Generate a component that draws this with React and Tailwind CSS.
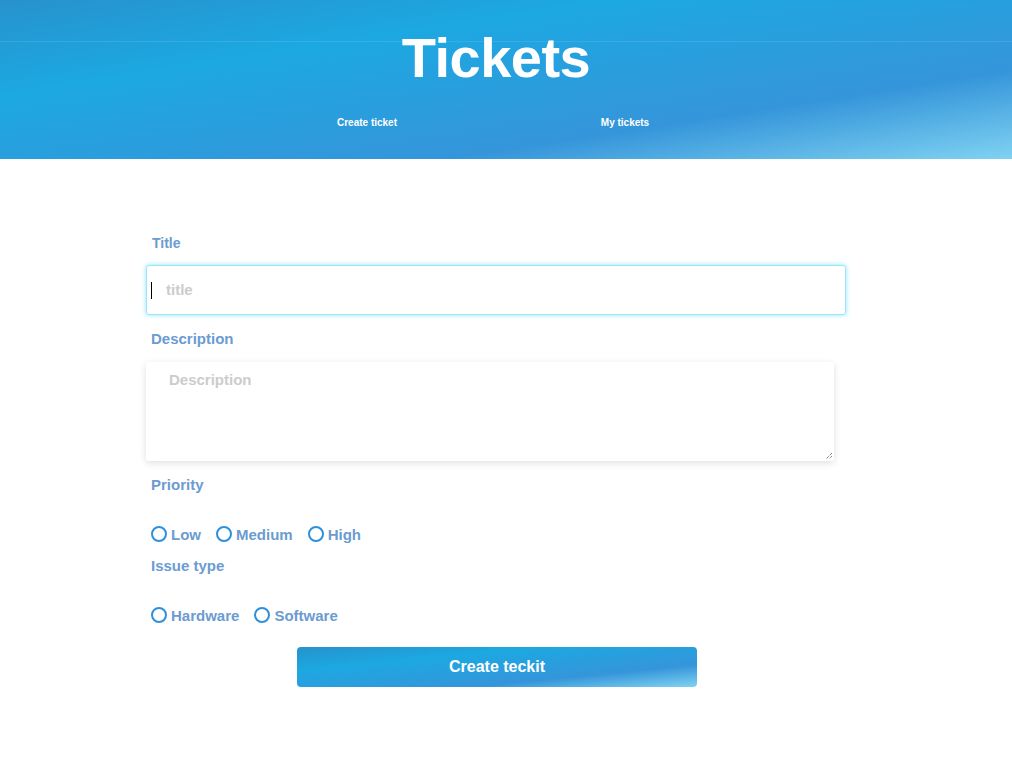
import React from "react";

const font = { fontFamily: '"Liberation Sans", Arial, sans-serif' };

function Radio({ label }) {
  return (
    <label className="flex items-center gap-[4px]">
      <span className="-mt-[3px] box-border h-[16px] w-[16px] rounded-full border-2 border-[#2e8fdb] bg-white" />
      <span className="text-[15px] font-bold text-[#6b9bd1] leading-[20px]">{label}</span>
    </label>
  );
}

export default function App() {
  return (
    <div className="min-h-[772px] w-full bg-white" style={font}>
      <header className="h-[159px] w-full bg-[linear-gradient(to_bottom_right,#2792cd_0%,#1ca8e1_30%,#3595da_72%,#7fd2f1_100%)]">
        <div className="h-[42px] w-full border-b border-white/10" />
        <div className="w-[992px]">
          <h1 className="-mt-[17px] text-center text-[56px] font-bold leading-[66px] tracking-[-0.5px] text-white">Tickets</h1>
          <nav className="mt-[25px] flex justify-center">
            <a className="w-[258px] text-center text-[10px] font-bold leading-[14px] text-white">Create ticket</a>
            <a className="w-[258px] text-center text-[10px] font-bold leading-[14px] text-white">My tickets</a>
          </nav>
        </div>
      </header>
      <div className="w-[992px]">
        <form className="mx-auto flex w-[700px] flex-col pt-[74px]">
          <div className="pl-[6px] text-[14px] font-bold leading-[20px] text-[#6b9bd1]">Title</div>
          <div className="mt-[12px] flex h-[50px] items-center rounded-[3px] border border-[#9be6fb] bg-white pl-[4px] shadow-[0_0_5px_#8fe2fb]">
            <span className="h-[17px] w-px bg-black" />
            <span className="ml-[14px] text-[15px] font-bold text-[#cccccc]">title</span>
          </div>
          <div className="mt-[14px] pl-[5px] text-[15px] font-bold leading-[20px] text-[#6b9bd1]">Description</div>
          <div className="relative mt-[13px] h-[99px] w-[688px] rounded-[2px] bg-white shadow-[0_2px_7px_rgba(0,0,0,0.13)]">
            <div className="pl-[23px] pt-[9px] text-[15px] font-bold leading-[18px] text-[#cccccc]">Description</div>
            <svg className="absolute bottom-[1px] right-[1px]" width="8" height="8" viewBox="0 0 8 8">
              <path d="M7 1 L1 7 M7 4 L4 7" stroke="#555" strokeWidth="1" strokeDasharray="1 1" />
            </svg>
          </div>
          <div className="mt-[14px] pl-[5px] text-[15px] font-bold leading-[20px] text-[#6b9bd1]">Priority</div>
          <div className="mt-[30px] flex gap-[15px] pl-[5px]">
            <Radio label="Low" />
            <Radio label="Medium" />
            <Radio label="High" />
          </div>
          <div className="mt-[11px] pl-[5px] text-[15px] font-bold leading-[20px] text-[#6b9bd1]">Issue type</div>
          <div className="mt-[30px] flex gap-[15px] pl-[5px]">
            <Radio label="Hardware" />
            <Radio label="Software" />
          </div>
          <button
            type="button"
            className="ml-[151px] mt-[21px] h-[40px] w-[400px] rounded-[4px] bg-[linear-gradient(to_bottom_right,#2792cd_0%,#1ca8e1_30%,#3595da_72%,#7fd2f1_100%)] text-[16px] font-bold text-white"
          >
            Create teckit
          </button>
        </form>
      </div>
    </div>
  );
}
